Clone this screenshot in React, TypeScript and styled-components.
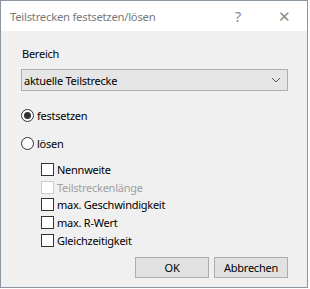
import React, { FC } from "react";
import styled, { createGlobalStyle } from "styled-components";

const Global = createGlobalStyle`
  html, body {
    margin: 0;
    padding: 0;
    background: #ffffff;
  }
  body {
    font-family: "Noto Sans", "Open Sans", sans-serif;
    font-size: 11px;
    letter-spacing: -0.25px;
    color: #000;
  }
`;

const Window = styled.div`
  width: 308px;
  height: 288px;
  box-sizing: border-box;
  border: 1px solid #8c96a0;
  background: #f0f0f0;
  display: flex;
  flex-direction: column;
`;

const TitleBar = styled.div`
  height: 30px;
  background: #fff;
  display: flex;
  align-items: center;
  padding-left: 9px;
  color: #7a7a7a;
  font-size: 11.3px;
`;

const TitleText = styled.span`
  flex: 1;
`;

const TitleButton = styled.span`
  width: 46px;
  text-align: center;
  color: #8a8a8a;
  font-size: 15px;
`;

const Body = styled.div`
  flex: 1;
  display: flex;
  flex-direction: column;
  padding: 15px 19px 0 20px;
`;

const Label = styled.div`
  height: 16px;
  line-height: 16px;
  margin-left: 1px;
`;

const Combo = styled.div`
  margin-top: 7px;
  height: 22px;
  box-sizing: border-box;
  border: 1px solid #adadad;
  background: #e5e5e5;
  display: flex;
  align-items: center;
  padding-left: 2px;
  padding-right: 6px;
`;

const ComboText = styled.span`
  flex: 1;
`;

const RadioRow = styled.label<{ $gap: number }>`
  display: flex;
  align-items: center;
  gap: 3px;
  height: 16px;
  margin-top: ${(p) => p.$gap}px;
`;

const RadioCircle = styled.span<{ $checked?: boolean }>`
  width: 13px;
  height: 13px;
  box-sizing: border-box;
  border-radius: 50%;
  border: 1px solid #333;
  background: #fff;
  display: flex;
  align-items: center;
  justify-content: center;
  &::after {
    content: "";
    width: 7px;
    height: 7px;
    border-radius: 50%;
    background: #333;
    display: ${(p) => (p.$checked ? "block" : "none")};
  }
`;

const CheckList = styled.div`
  margin-top: 10px;
  margin-left: 20px;
  display: flex;
  flex-direction: column;
`;

const CheckRow = styled.div<{ $disabled?: boolean }>`
  display: flex;
  align-items: center;
  gap: 3px;
  height: 17.6px;
  color: ${(p) => (p.$disabled ? "#a0a0a0" : "#000")};
`;

const CheckBox = styled.span<{ $disabled?: boolean }>`
  width: 13px;
  height: 13px;
  box-sizing: border-box;
  border: 1px solid ${(p) => (p.$disabled ? "#cccccc" : "#333")};
  background: #fff;
`;

const ButtonBar = styled.div`
  display: flex;
  justify-content: flex-end;
  gap: 5px;
  margin-top: auto;
  margin-bottom: 9px;
`;

const Button = styled.button`
  width: 74px;
  height: 21px;
  box-sizing: border-box;
  border: 1px solid #adadad;
  background: #e1e1e1;
  font-family: inherit;
  font-size: 11px;
  letter-spacing: inherit;
  color: #000;
  padding: 0;
`;

const Chevron: FC = () => (
  <svg width="10" height="6" viewBox="0 0 10 6">
    <path d="M1 1 L5 5 L9 1" fill="none" stroke="#555" strokeWidth="1" />
  </svg>
);

const options = [
  { label: "Nennweite" },
  { label: "Teilstreckenlänge", disabled: true },
  { label: "max. Geschwindigkeit" },
  { label: "max. R-Wert" },
  { label: "Gleichzeitigkeit" },
];

const App: FC = () => (
  <>
    <Global />
    <Window>
      <TitleBar>
        <TitleText>Teilstrecken festsetzen/lösen</TitleText>
        <TitleButton>?</TitleButton>
        <TitleButton>✕</TitleButton>
      </TitleBar>
      <Body>
        <Label>Bereich</Label>
        <Combo>
          <ComboText>aktuelle Teilstrecke</ComboText>
          <Chevron />
        </Combo>
        <RadioRow $gap={16}>
          <RadioCircle $checked />
          festsetzen
        </RadioRow>
        <RadioRow $gap={12}>
          <RadioCircle />
          lösen
        </RadioRow>
        <CheckList>
          {options.map((o) => (
            <CheckRow key={o.label} $disabled={o.disabled}>
              <CheckBox $disabled={o.disabled} />
              {o.label}
            </CheckRow>
          ))}
        </CheckList>
        <ButtonBar>
          <Button>OK</Button>
          <Button>Abbrechen</Button>
        </ButtonBar>
      </Body>
    </Window>
  </>
);

export default App;
